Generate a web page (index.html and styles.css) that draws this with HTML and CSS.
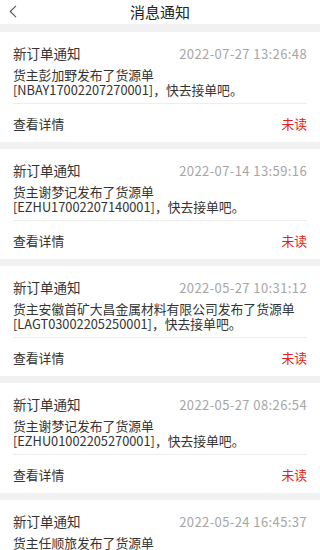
FILE: index.html
```html
<!DOCTYPE html>
<html lang="zh-CN">
<head>
<meta charset="utf-8">
<title>消息通知</title>
<link rel="stylesheet" href="styles.css">
</head>
<body>
<header class="topbar">
  <span class="back"><svg width="8" height="13" viewBox="0 0 8 13"><polyline points="7,0.8 1.2,6.5 7,12.2" fill="none" stroke="#555" stroke-width="1.1"/></svg></span>
  <h1 class="title">消息通知</h1>
</header>
<main class="list">
  <section class="card">
    <div class="body">
      <div class="head"><span class="name">新订单通知</span><span class="time">2022-07-27 13:26:48</span></div>
      <p class="msg"><span class="ln">货主彭加野发布了货源单</span><span class="ln">[NBAY17002207270001]，快去接单吧。</span></p>
    </div>
    <div class="foot"><span>查看详情</span><span class="unread">未读</span></div>
  </section>
  <section class="card">
    <div class="body">
      <div class="head"><span class="name">新订单通知</span><span class="time">2022-07-14 13:59:16</span></div>
      <p class="msg"><span class="ln">货主谢梦记发布了货源单</span><span class="ln">[EZHU17002207140001]，快去接单吧。</span></p>
    </div>
    <div class="foot"><span>查看详情</span><span class="unread">未读</span></div>
  </section>
  <section class="card">
    <div class="body">
      <div class="head"><span class="name">新订单通知</span><span class="time">2022-05-27 10:31:12</span></div>
      <p class="msg"><span class="ln">货主安徽首矿大昌金属材料有限公司发布了货源单</span><span class="ln">[LAGT03002205250001]，快去接单吧。</span></p>
    </div>
    <div class="foot"><span>查看详情</span><span class="unread">未读</span></div>
  </section>
  <section class="card">
    <div class="body">
      <div class="head"><span class="name">新订单通知</span><span class="time">2022-05-27 08:26:54</span></div>
      <p class="msg"><span class="ln">货主谢梦记发布了货源单</span><span class="ln">[EZHU01002205270001]，快去接单吧。</span></p>
    </div>
    <div class="foot"><span>查看详情</span><span class="unread">未读</span></div>
  </section>
  <section class="card">
    <div class="body">
      <div class="head"><span class="name">新订单通知</span><span class="time">2022-05-24 16:45:37</span></div>
      <p class="msg"><span class="ln">货主任顺旅发布了货源单</span><span class="ln">[RSLV01002205240001]，快去接单吧。</span></p>
    </div>
    <div class="foot"><span>查看详情</span><span class="unread">未读</span></div>
  </section>
</main>
</body>
</html>
```
FILE: styles.css
```css
* { box-sizing: border-box; }
html, body { margin: 0; padding: 0; }
body {
  background: #f1f1f1;
  font-family: "Noto Sans CJK SC", "Noto Sans", sans-serif;
  color: #333;
}
.topbar {
  height: 24px;
  background: #fff;
  display: flex;
  align-items: center;
  justify-content: center;
  position: relative;
}
.back {
  position: absolute;
  left: 9px;
  top: 5px;
  display: flex;
}
.title {
  margin: 0;
  font-size: 15px;
  font-weight: normal;
  line-height: 24px;
  color: #222;
}
.list {
  display: flex;
  flex-direction: column;
  gap: 7px;
  padding-top: 8px;
}
.card {
  background: #fff;
  padding: 0 13px;
  height: 110px;
  display: flex;
  flex-direction: column;
}
.body {
  padding-top: 11px;
  padding-bottom: 6px;
  border-bottom: 1px solid #eeeeee;
}
.head {
  display: flex;
  justify-content: space-between;
  align-items: center;
  height: 20px;
}
.name { font-size: 13.5px; color: #333; }
.time { font-size: 13px; letter-spacing: 0.4px; color: #a6a6a6; }
.msg {
  margin: 5px 0 0;
  font-size: 12.8px;
  color: #333;
  white-space: nowrap;
  display: flex;
  flex-direction: column;
}
.ln {
  display: block;
  height: 14.7px;
  line-height: 14.7px;
}
.foot {
  flex: 1;
  display: flex;
  justify-content: space-between;
  align-items: center;
  font-size: 12.8px;
  color: #333;
}
.unread { color: #e0201b; }
```
